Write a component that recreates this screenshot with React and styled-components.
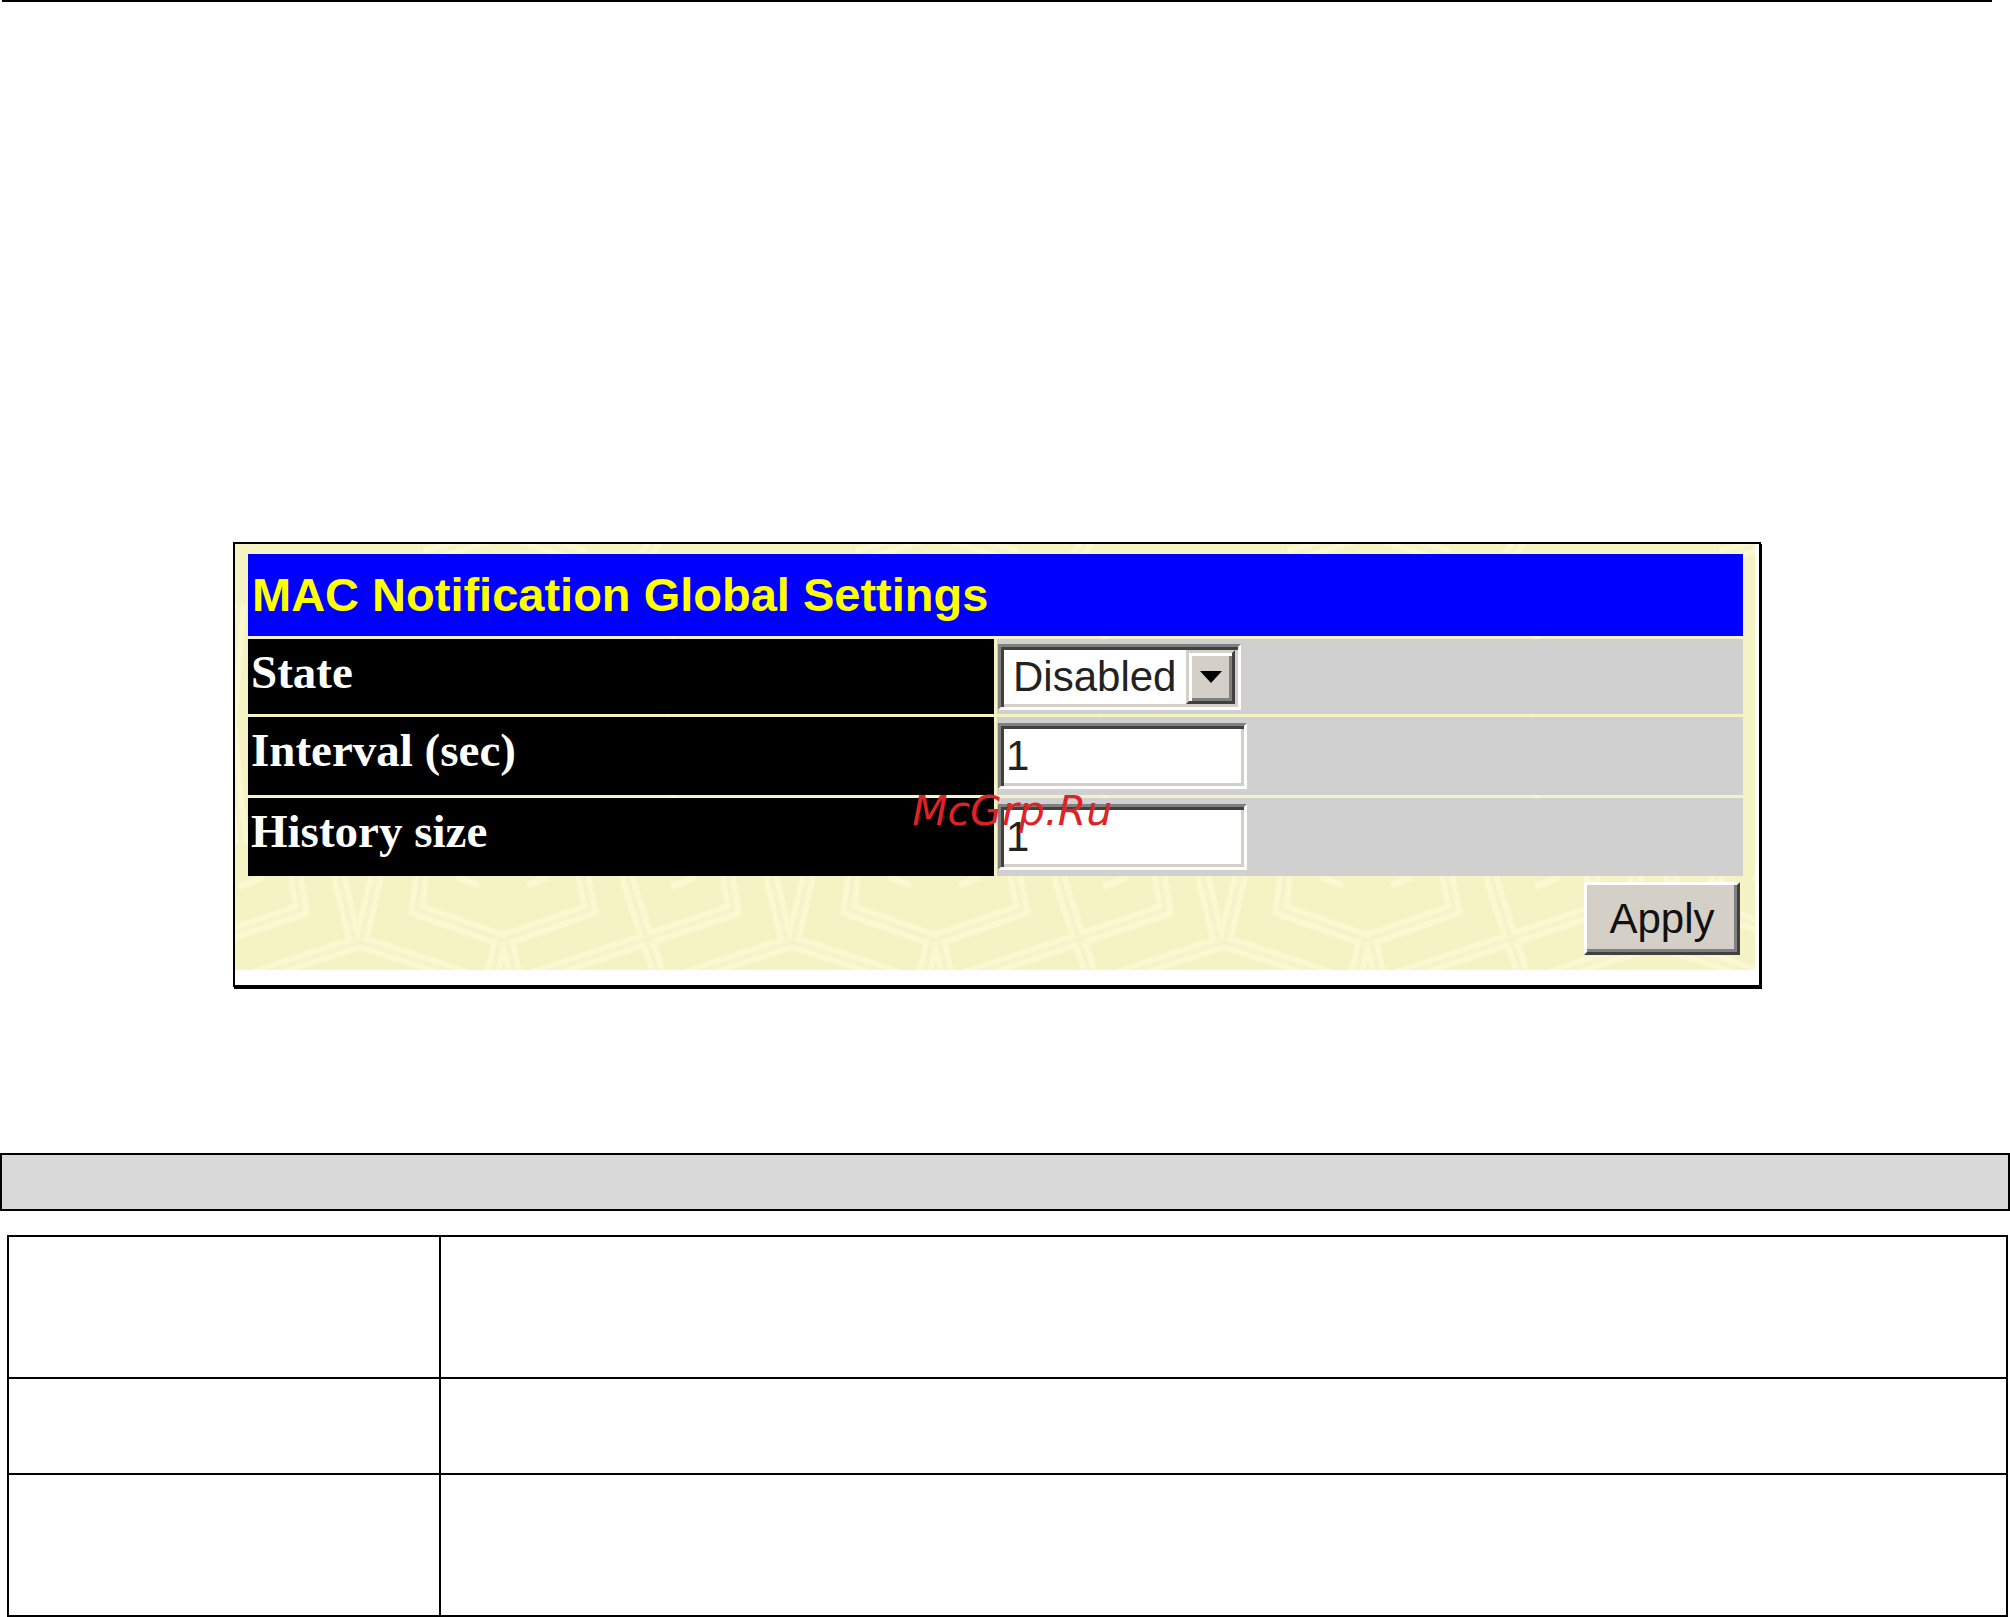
import React, { useState } from 'react'
import styled, { createGlobalStyle } from 'styled-components'

const c = {
  ink: '#000000',
  cream: '#f5f2c4',
  creamLight: '#fbf8d1',
  creamDark: '#f6f3cb',
  header: '#0000ff',
  headerText: '#ffff00',
  cell: '#d0d0d0',
  face: '#d4d0c8',
  shadow: '#808080',
  darkShadow: '#404040',
  bar: '#d9d9d9',
  stamp: '#de2226',
}

const sans = "'Liberation Sans', Arial, sans-serif"
const serif = "'Liberation Serif', 'Times New Roman', serif"

const strands = [
  'M94 290L119 396M151 290L126 396',
  'M20 432L125 398L230 432',
  'M190 300L182 366L268 396L355 366L342 300',
  'M265 396L257 432M272 396L280 432',
  'M488 300L498 366L412 395L300 432',
  'M56 300L66 366L-20 395L-132 432',
  'M378 290L412 395L424 432',
  'M190 12L268 -12L350 12M410 12L424 -8',
  'M4 60L-6 180L6 300',
]

const flecks = 'M4 343L28 333M222 333L244 341M292 341L314 333'

const Weave = () => (
  <WeaveSvg aria-hidden='true'>
    <defs>
      <pattern id='weave' width='432' height='432' patternUnits='userSpaceOnUse'>
        <rect width='432' height='432' fill={c.cream} />
        {strands.map(d => (
          <path key={d} d={d} fill='none' stroke={c.creamLight} strokeWidth='16' />
        ))}
        {strands.map(d => (
          <path key={d} d={d} fill='none' stroke={c.creamDark} strokeWidth='4' />
        ))}
        <path d={flecks} fill='none' stroke={c.creamLight} strokeWidth='7' />
      </pattern>
    </defs>
    <rect width='100%' height='100%' fill='url(#weave)' />
  </WeaveSvg>
)

const App = () => {
  const [state, setState] = useState('Disabled')
  const [interval, setInterval] = useState('1')
  const [historySize, setHistorySize] = useState('1')

  return (
    <Page>
      <GlobalStyle />
      <Sheet>
        <Rule />
        <Figure>
          <Panel onSubmit={e => e.preventDefault()}>
            <Weave />
            <Settings>
              <thead>
                <tr>
                  <Title colSpan={2}>MAC Notification Global Settings</Title>
                </tr>
              </thead>
              <tbody>
                <tr>
                  <Label $height={75}>
                    <label htmlFor='state'>State</label>
                  </Label>
                  <Value>
                    <SelectBox>
                      <Select id='state' value={state} onChange={e => setState(e.target.value)}>
                        <option>Disabled</option>
                        <option>Enabled</option>
                      </Select>
                      <Arrow>
                        <svg width='22' height='12' viewBox='0 0 22 12' aria-hidden='true'>
                          <path d='M0 0H22L11 12Z' />
                        </svg>
                      </Arrow>
                    </SelectBox>
                  </Value>
                </tr>
                <tr>
                  <Label $height={78}>
                    <label htmlFor='interval'>Interval (sec)</label>
                  </Label>
                  <Value>
                    <Input id='interval' value={interval} onChange={e => setInterval(e.target.value)} />
                  </Value>
                </tr>
                <tr>
                  <Label $height={78}>
                    <label htmlFor='history'>History size</label>
                  </Label>
                  <Value>
                    <Input
                      id='history'
                      value={historySize}
                      onChange={e => setHistorySize(e.target.value)}
                    />
                  </Value>
                </tr>
              </tbody>
            </Settings>
            <Actions>
              <Button type='submit'>Apply</Button>
            </Actions>
          </Panel>
          <Stamp>McGrp.Ru</Stamp>
        </Figure>
      </Sheet>
      <Bar />
      <Parameters>
        <tbody>
          {[142, 96, 142].map((height, i) => (
            <tr key={i}>
              <ParamName $height={height} />
              <ParamText />
            </tr>
          ))}
        </tbody>
      </Parameters>
    </Page>
  )
}

const GlobalStyle = createGlobalStyle`
  * {
    box-sizing: border-box;
  }
  body {
    margin: 0;
    background: #fff;
    color: ${c.ink};
    font-family: ${sans};
  }
`

const Page = styled.main`
  display: flex;
  flex-direction: column;
`

const Sheet = styled.section`
  padding-right: 16px;
`

const Rule = styled.hr`
  height: 2px;
  margin: 0 2px;
  border: 0;
  background: ${c.ink};
`

const Figure = styled.div`
  position: relative;
  margin: 540px 233px 0;
  padding: 0 4px 15px 0;
  border: 2px solid ${c.ink};
  box-shadow: 1px 2px 0 ${c.ink};
`

const Panel = styled.form`
  position: relative;
  overflow: hidden;
  padding: 7px 9px 15px 10px;
`

const WeaveSvg = styled.svg`
  position: absolute;
  inset: 0;
  width: 100%;
  height: 100%;
`

const Settings = styled.table`
  position: relative;
  width: 100%;
  table-layout: fixed;
  border-spacing: 3px;
`

const Title = styled.th`
  height: 82px;
  padding: 0 4px;
  background: ${c.header};
  color: ${c.headerText};
  font: bold 47px/60px ${sans};
  text-align: left;
`

const Label = styled.th`
  height: ${props => props.$height}px;
  padding: 5px 3px 0;
  background: ${c.ink};
  color: #fff;
  font: bold 47px/56px ${serif};
  text-align: left;
  vertical-align: top;
`

const Value = styled.td`
  padding: 0 1px;
  background: ${c.cell};
  vertical-align: middle;
`

const SelectBox = styled.div`
  display: grid;
  width: 243px;
  height: 66px;
  border: 3px solid;
  border-color: ${c.shadow} #fff #fff ${c.shadow};
  box-shadow: inset 3px 3px 0 ${c.darkShadow}, inset -3px -3px 0 ${c.face};
  background: #fff;
`

const Select = styled.select`
  grid-area: 1 / 1;
  appearance: none;
  width: 100%;
  padding: 0 54px 0 12px;
  border: 0;
  background: transparent;
  color: #222;
  font: 42px/48px ${sans};
`

const Arrow = styled.span`
  grid-area: 1 / 1;
  display: flex;
  align-items: center;
  justify-content: center;
  justify-self: end;
  width: 49px;
  margin: 3px 3px 3px 0;
  border: 3px solid;
  border-color: ${c.face} ${c.darkShadow} ${c.darkShadow} ${c.face};
  box-shadow: inset 3px 3px 0 #fff, inset -3px -3px 0 ${c.shadow};
  background: ${c.face};
  pointer-events: none;
`

const Input = styled.input`
  display: block;
  width: 249px;
  height: 66px;
  padding: 0 5px;
  border: 3px solid;
  border-color: ${c.shadow} #fff #fff ${c.shadow};
  border-radius: 0;
  box-shadow: inset 3px 3px 0 ${c.darkShadow}, inset -3px -3px 0 ${c.face};
  background: #fff;
  color: #222;
  font: 42px/48px ${sans};
`

const Actions = styled.div`
  position: relative;
  display: flex;
  justify-content: flex-end;
  padding: 3px 6px 0 0;
`

const Button = styled.button`
  width: 156px;
  height: 73px;
  padding: 0;
  border: 3px solid;
  border-color: #fff ${c.darkShadow} ${c.darkShadow} #fff;
  box-shadow: inset -3px -3px 0 ${c.shadow};
  background: ${c.face};
  color: #111;
  font: 42px/48px ${sans};
`

/* Watermark printed over the middle of the form */
const Stamp = styled.span`
  position: absolute;
  top: 243px;
  left: 51%;
  transform: translateX(-50%);
  color: ${c.stamp};
  font: italic 41px/48px 'DejaVu Sans', Verdana, sans-serif;
  pointer-events: none;
`

const Bar = styled.div`
  height: 58px;
  margin-top: 166px;
  border: 2px solid ${c.ink};
  background: ${c.bar};
`

const Parameters = styled.table`
  margin: 24px 2px 0 7px;
  border-collapse: collapse;
  table-layout: fixed;
  width: calc(100% - 9px);
`

const ParamName = styled.th`
  width: 432px;
  height: ${props => props.$height}px;
  padding: 0;
  border: 2px solid ${c.ink};
`

const ParamText = styled.td`
  padding: 0;
  border: 2px solid ${c.ink};
`

export default App
